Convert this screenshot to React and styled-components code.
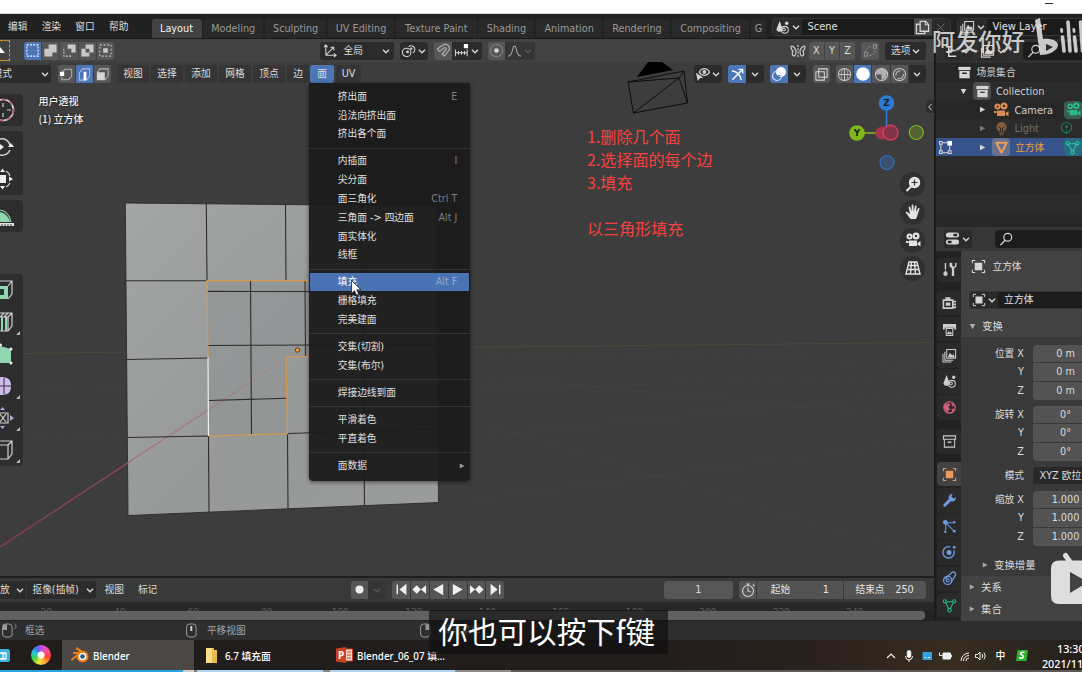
import React from "react";
import styled, { createGlobalStyle, css } from "styled-components";

const Global = createGlobalStyle`
  * { box-sizing: border-box; }
  body { margin: 0; background: #fff; overflow: hidden; }
`;

const ui = `"DejaVu Sans", "Noto Sans CJK SC", sans-serif`;
const cjk = `"Noto Sans CJK SC", "Noto Sans", sans-serif`;

/* ---------- icons, drawn on a 16 x 16 grid ---------- */
const s1 = { fill: "none", stroke: "currentColor", strokeWidth: 1.1 };
const ICONS = {
  down: <path d="M4.5 6.5 8 10l3.5-3.5" {...s1} strokeWidth={1.5} />,
  left: <path d="M10.5 3 6 8l4.5 5" {...s1} strokeWidth={1.5} />,
  triDown: <path d="M3 3.5h10L8 13z" fill="currentColor" />,
  triRight: <path d="M3.500 3.200v9.600L13 8z" fill="currentColor" />,
  selNew: <rect x="2" y="2" width="12" height="12" fill="none" stroke="#fff" strokeWidth="1.1" strokeDasharray="2 1.4" />,
  selAdd: <path d="M6 1.5h8.5V10H10v4.5H1.5V6H6z" fill="currentColor" />,
  selSub: <><path d="M6 1.5h8.5V10H10V6H6z" fill="currentColor" /><path d="M2 6v8h8" {...s1} strokeDasharray="2 1.4" /></>,
  selInv: <path fillRule="evenodd" d="M6 1.5h8.5V10H10v4.5H1.5V6H6zM6 6v4h4V6z" fill="currentColor" />,
  selAnd: <><path d="M5.5 5.5h5v5h-5z" fill="currentColor" /><rect x="2" y="2" width="12" height="12" {...s1} strokeDasharray="2 2" /></>,
  vert: <><path d="M3 10.500v3h7l3.500-3.500V2.500H6.500L3.500 5" {...s1} opacity=".7" /><path d="M1 5h4.500v4.500H1z" fill="#fff" /></>,
  edge: <><path d="M2.500 6v8h7.500l3.500-4V2H6z" {...s1} opacity=".75" /><path d="M7 5h3v9H7z" fill="#fff" /></>,
  face: <><path d="M2 6l3.500-4H14v8l-3.500 4" {...s1} opacity=".75" /><path d="M2 5.500h8.500V14H2z" fill="currentColor" /></>,
  axes: <><path d="M3 13V2.500M3 13h10.500M3 13l8-8M1 4.500l2-2.500 2 2.500M11.500 11l2.500 2-2.500 2M8 4.500h3.500V8" {...s1} /></>,
  pivot: <><circle cx="6" cy="10" r="4.500" {...s1} /><path d="M8 4a4 4 0 1 1 4.500 6.500" {...s1} /><circle cx="7" cy="9.500" r="1.500" fill="currentColor" /><circle cx="11" cy="6" r="1.200" fill="currentColor" /></>,
  magnet: <path d="M1.500 6.500 6 3c6-4.500 11 2 6.500 6.500L9 14l-2.500-2 3.800-4.500c1.500-2.300-.8-3.300-2.300-2L3.800 9z" {...s1} strokeWidth={1.400} />,
  snapInc: <><path d="M1.500 7v7M14 7v7M1.500 10.500H14M4.700 8.500v4M8 8.500v4M11.200 8.500v4" {...s1} /><path d="M10.500 1h4.500v4.500h-4.500z" fill="#fff" /></>,
  prop: <><circle cx="8" cy="8" r="6.500" {...s1} opacity=".35" /><circle cx="8" cy="8" r="2.500" fill="currentColor" /></>,
  curve: <path d="M1 14c3 0 4-2 5-7s3-5 4 0 2 7 5 7" {...s1} />,
  butterfly: <><path d="M8 2v12" {...s1} strokeDasharray="2 1.300" /><path d="M6 7.500C4 2.500.5 2 1 4.500S2.500 8 3.500 8C1.500 9 2 13 4 13s2-3 2-5.500zM10 7.500c2-5 5.500-5.500 5-3S13.500 8 12.500 8c2 1 1.500 5-.5 5s-2-3-2-5.500z" {...s1} /></>,
  merge: <><path d="M3 10c0-4 2-6 6-6M7 13c4 0 6-2 6-6" {...s1} strokeDasharray="2 1.500" /><path d="M11 2h3.500v3.500H11zM1.500 10.500H5V14H1.500z" {...s1} /></>,
  eye: <><path d="M4.500 5.500c2.500-5 8.500-5 11 0-2.500 4.500-8.500 4.500-11 0z" {...s1} strokeWidth={1.3} /><circle cx="10" cy="5.300" r="2" fill="currentColor" /><path d="M1 6l8 5.500-3.500.3L3 15z" fill="currentColor" /></>,
  gizmo: <><path d="M2 4c6 1 9 4 10 10M2.500 13.500 13 3M9 2.500h4.500V7" {...s1} strokeWidth={1.5} /></>,
  overlay: <><circle cx="10" cy="6" r="5" fill="#fff" /><circle cx="6" cy="10" r="4.500" fill="none" stroke="#dfe7f5" strokeWidth="1.200" /><path d="M6.500 9.500a3 3 0 0 1 3 .5" stroke="#4772b3" fill="none" /></>,
  xray: <><path d="M2 5h9v9H2z" {...s1} /><path d="M5 2h9v9H5z" {...s1} /></>,
  wire: <><circle cx="8" cy="8" r="6.500" {...s1} /><path d="M1.500 8h13M8 1.500v13" {...s1} /><ellipse cx="8" cy="8" rx="3.500" ry="6.500" {...s1} opacity=".6" /></>,
  solid: <circle cx="8" cy="8" r="6.800" fill="#fff" />,
  matcap: <><circle cx="8" cy="8" r="6.500" {...s1} /><path d="M8 8V1.500A6.500 6.500 0 0 0 1.500 8zM8 1.500A6.500 6.500 0 0 1 14.500 8H8zM8 8h5v3.500L8 14z" fill="currentColor" opacity=".8" /></>,
  render: <><circle cx="8" cy="8" r="6.500" {...s1} /><path d="M4 9c0-3 2-5 5-5M6 12.500c4 .5 6-2 6.500-5" {...s1} /></>,
  scene: <><path d="M5 1 8 9.500c0 4-6.500 4-6.500 0z" fill="currentColor" /><circle cx="10.500" cy="10.500" r="3.700" {...s1} /><circle cx="9.500" cy="10" r="1.500" {...s1} /><circle cx="12.500" cy="3.500" r="1.800" fill="currentColor" /></>,
  copy: <><path d="M5.500 1.500h6L14.500 5v7h-9z" {...s1} strokeWidth={1.4} /><path d="M11 1.500V5h3.500" {...s1} /><path d="M5 4.500H1.500v10h9V12" {...s1} strokeWidth={1.4} /></>,
  close: <path d="m2.500 2.500 11 11m0-11-11 11" {...s1} />,
  layers: <><path d="M5 1.500h9.500V11H5z" {...s1} /><path d="M3 4v9h9M1 6v9h9" {...s1} /><path d="m6 10 2.500-5L11 8l1-1.500 2 3.500z" fill="currentColor" /></>,
  image: <><path d="M3.500 1.500h11V12h-11z" {...s1} /><path d="M1.500 4v10h10" {...s1} /><path d="m4.500 11 3.500-7 3 4 1-1 2 4z" fill="currentColor" /></>,
  tree: <path d="M1 3h6M4 3v4h8M4 7v6h8" {...s1} strokeWidth={1.6} />,
  search: <><circle cx="10" cy="6" r="4.500" {...s1} strokeWidth={1.3} /><path d="M7 9.500 1.500 15" {...s1} strokeWidth={1.5} /></>,
  box: <><path d="M1.500 2h13v3.500h-13z" fill="currentColor" /><path fillRule="evenodd" d="M2.500 6.500h11V14h-11zM5.500 8v1.500h5V8z" fill="currentColor" /></>,
  boxLine: <><path d="M1.500 2h13v3.500h-13zM2.500 5.500h11V14h-11z" {...s1} /><path d="M6 8h4v1.500H6z" fill="currentColor" /></>,
  camera: <><circle cx="4.500" cy="4.500" r="3" fill="currentColor" /><circle cx="11" cy="4" r="3.500" fill="currentColor" /><path d="M4 8.500h8v5.500H4zM12.500 11l3-2v5.500l-3-2zM1 9h2.500v2H1z" fill="currentColor" /><circle cx="4.500" cy="4.500" r="1" fill="#3a2c22" /><circle cx="11" cy="4" r="1.200" fill="#3a2c22" /></>,
  bulb: <><path d="M8 1a5.500 5.500 0 0 1 3 10H5A5.500 5.500 0 0 1 8 1zM5.500 12h5v1.300h-5zM6 14h4v1.300H6z" fill="currentColor" /><path d="M5 6l2 1.500V11M11 6 9 7.500V11" stroke="#2a2420" fill="none" /></>,
  mesh: <path d="M2.500 3h11L8 13.500z" fill="none" stroke="currentColor" strokeWidth="2.200" strokeLinejoin="round" />,
  meshData: <><path d="M4.500 4h7M4 5l3.500 7M12 5l-3.500 7" {...s1} /><g {...s1}><circle cx="2.900" cy="3.500" r="1.700" /><circle cx="13.100" cy="3.500" r="1.700" /><circle cx="8" cy="13" r="1.900" /></g></>,
  lightData: <><circle cx="8" cy="7" r="5.500" {...s1} /><path d="M8 6v9" {...s1} strokeDasharray="2 1" /><circle cx="8" cy="6" r="1.400" fill="currentColor" /></>,
  editMode: <><path d="M3 5v7M5 13.500h6M12.500 6v5M5 3h5" {...s1} /><path d="M1.500 1.500h3v3h-3zM1.500 11.500h3v3h-3zM11 11.500h3v3h-3z" {...s1} /><path d="M10 1h5v5h-5z" fill="#fff" /></>,
  propsEd: <><rect x="1" y="1.500" width="14" height="5.500" rx="2.700" fill="currentColor" /><rect x="1" y="9" width="14" height="5.500" rx="2.700" fill="currentColor" /><path d="M9 3h4v2.500H9zM3 10.500h4V13H3z" fill="#2a2a2a" /></>,
  object: <><path d="M4 4h8v8H4z" fill="currentColor" /><path d="M1.500 4.500v-3h3M11.500 1.500h3v3M14.500 11.500v3h-3M4.500 14.500h-3v-3" {...s1} /></>,
  tool: <><path d="M3.700 1v7M3.700 9v5.500" stroke="currentColor" fill="none" strokeWidth="1.500" /><circle cx="3.700" cy="12.500" r="2.300" fill="currentColor" /><path d="M8 1v3.500l2.500 2.500v8h2.500V7l2.500-2.500V1l-1.500-.3V4l-1.500 1-1.500-1V.7z" fill="currentColor" /></>,
  renderTab: <><path d="M1.500 5.500h10V14h-10z" fill="none" stroke="currentColor" strokeWidth="1.700" /><path d="M4 8h5v3.500H4zM3.500 2.500H9V5H3.500zM12 6h3v2h-3zM12 9h3v2h-3zM12 12h3v2h-3z" fill="currentColor" /></>,
  output: <><path d="M1 2h14v6h-2V6H3v2H1z" fill="currentColor" /><path d="M4.500 7h7v7.500h-7z" {...s1} /><path d="m5 13 2-3.500 1.500 2L9.500 10l1.500 3z" fill="currentColor" /></>,
  world: <><circle cx="8" cy="8" r="6" {...s1} strokeWidth={1.4} /><path d="M3 5c2 0 3-2 5-1s0 2-1 3 2 1 1 3-2 1-2 3c-2-1-3-4-4-5zM10 3l3 3-2 1zM10 9l3 .5-2 3z" fill="currentColor" /></>,
  wrench: <path d="M15 4.500a4 4 0 0 1-5.500 4.200L4 14.200c-1.500 1.300-3.500-.7-2.200-2.200L7.300 6.500A4 4 0 0 1 11.500 1L9.800 3.500l2.700 2.700z" fill="currentColor" />,
  particles: <><path d="M4 5v7M5.500 4H12M5 5l7 7" {...s1} /><circle cx="3.500" cy="3.500" r="2.500" fill="currentColor" /><circle cx="13" cy="3.500" r="1.300" fill="currentColor" /><circle cx="13" cy="13" r="1.500" fill="currentColor" /><circle cx="3.500" cy="13.500" r="1.300" fill="currentColor" /></>,
  physics: <><path d="M12.500 5.500A6 6 0 1 1 9 2.200" {...s1} strokeWidth={1.400} /><circle cx="7.500" cy="8" r="2.700" fill="currentColor" /><circle cx="13" cy="2.500" r="1.500" fill="currentColor" /></>,
  constraint: <><path d="M3 8.500 10.500 1.500c2.500-1.500 5 1 3.500 3.500L9.500 12.500" {...s1} strokeWidth={1.400} /><circle cx="6" cy="10" r="4.300" {...s1} strokeWidth={1.400} /><circle cx="6" cy="10" r="1.600" {...s1} /></>,
  zoom: <><circle cx="9.500" cy="6.500" r="5.700" fill="currentColor" /><path d="M6 10.500 1.500 15" stroke="currentColor" strokeWidth="2.200" /><path d="M9.500 3.500v6M6.500 6.500h6" stroke="#333" strokeWidth="1.200" /></>,
  hand: <path d="M5.500 15C4 13.500 2.500 10.500.8 8.800c-.3-1 1-1.300 1.800-.6L5 10 3.700 3.500c0-1.200 1.300-1.300 1.600-.2L6.500 7.500 6.700 1.500c.1-1.200 1.600-1.200 1.700 0l.3 6L10 2.200c.3-1.100 1.700-.8 1.600.3L11 8l2-3.500c.7-1 1.800-.4 1.400.7L12.500 11c-.3 1.800-1 3-1.800 4z" fill="currentColor" />,
  persp: <path d="M4 2h8l3 12H1zM3.200 5.500h9.600M2.200 9.500h11.600M6.500 2 5.500 14M9.500 2l1 12" fill="none" stroke="currentColor" strokeWidth="1.400" />,
  first: <path d="M3.500 3v10M12.500 3.500v9L7 8z" fill="currentColor" stroke="currentColor" strokeWidth="1.500" />,
  last: <path d="M12.500 3v10M3.500 3.500v9L9 8z" fill="currentColor" stroke="currentColor" strokeWidth="1.500" />,
  prevKey: <path d="M.5 8 5 3.500 9.500 8 5 12.500zM15 3.500v9L9.500 8z" fill="currentColor" />,
  nextKey: <path d="M15.500 8 11 3.500 6.500 8l4.500 4.500zM1 3.500v9L6.500 8z" fill="currentColor" />,
  back: <path d="M13 2v12L2.500 8z" fill="currentColor" />,
  play: <path d="M3 2v12l10.500-6z" fill="currentColor" />,
  record: <circle cx="8" cy="8" r="4.300" fill="currentColor" />,
  clock: <><circle cx="8" cy="9" r="5.500" {...s1} /><path d="M8 5.500V9l2.500 1M6.500 2h3M8 2v1.500M13 2.500l1.500 1.500" {...s1} /></>,
};

const Svg = styled.svg`
  display: block;
  flex: none;
  width: ${(p) => p.$s}px;
  height: ${(p) => p.$s}px;
  color: ${(p) => p.$c};
  margin-left: ${(p) => p.$ml || 0}px;
`;
const Icon = ({ n, s = 15, c = "#d6d6d6", ml }) => (
  <Svg $s={s} $c={c} $ml={ml} viewBox="0 0 16 16">{ICONS[n]}</Svg>
);
const Chevron = styled.svg`
  display: block;
  flex: none;
  width: 12px;
  height: 12px;
  fill: none;
  stroke: ${(p) => p.$c || "#d6d6d6"};
  stroke-width: 1.4;
`;
const Down = ({ c }) => <Chevron $c={c} viewBox="0 0 12 12"><path d="M3 4.700 6 7.700l3-3" /></Chevron>;

/* ---------- frame ---------- */
const Screen = styled.div`
  position: relative;
  width: 1082px;
  height: 680px;
  overflow: hidden;
  display: flex;
  flex-direction: column;
  background: #fff;
  color: #dcdcdc;
  font: 9.7px/14px ${ui};
  white-space: nowrap;
`;
const Strip = styled.div`
  height: 14px;
  flex: none;
  border-bottom: 1px solid #d6d6d6;
  display: flex;
  justify-content: flex-end;
`;
const Minimise = styled.span`
  width: 8px;
  height: 1px;
  margin: 3px 29px 0 0;
  background: #333;
`;
const TopBar = styled.div`
  height: 25px;
  flex: none;
  display: flex;
  background: #212121;
  border-bottom: 1px solid #191919;
`;
const TopMenus = styled.div`
  width: 151.500px;
  flex: none;
  display: flex;
  gap: 14.300px;
  padding: 5.500px 0 0 8px;
`;
const Tabs = styled.div`
  display: flex;
  align-items: flex-end;
  gap: 1.700px;
  width: 613px;
  flex: none;
`;
const Tab = styled.div`
  width: ${(p) => p.$w}px;
  height: 19px;
  flex: none;
  padding-top: 3px;
  text-align: center;
  overflow: hidden;
  border-radius: 3px 3px 0 0;
  background: ${(p) => (p.$on ? "#424242" : "#292929")};
  color: ${(p) => (p.$on ? "#f0f0f0" : "#989898")};
`;
const Selector = styled.div`
  display: flex;
  height: 18px;
  margin: 4px 0 0 ${(p) => p.$ml}px;
  border-radius: 3px;
  overflow: hidden;
  background: #1b1b1b;
  border: 1px solid #363636;
  flex: none;
`;
const SelIcon = styled.div`
  display: flex;
  align-items: center;
  width: ${(p) => p.$w || 29}px;
  padding-left: ${(p) => (p.$w ? 1 : 2)}px;
  background: ${(p) => p.$bg || "#2a2a2a"};
`;
const SelText = styled.div`
  width: ${(p) => p.$w}px;
  padding: 0 0 0 6px;
  line-height: 15px;
  font-size: 9.900px;
  color: #e2e2e2;
`;

const Main = styled.div`
  display: flex;
  height: 582px;
  flex: none;
  background: #1c1c1c;
`;
const LeftCol = styled.div`
  width: 934px;
  margin-right: 2px;
  flex: none;
  display: flex;
  flex-direction: column;
  background: #3d3d3d;
`;
const RightCol = styled.div`
  width: 146px;
  flex: none;
  display: flex;
  flex-direction: column;
  overflow: hidden;
`;

/* ---------- header bars ---------- */
const Bar = styled.div`
  display: flex;
  align-items: center;
  height: ${(p) => p.$h}px;
  flex: none;
  background: ${(p) => p.$bg};
`;
const Group = styled.div`
  display: flex;
  flex: none;
  height: 18px;
  width: ${(p) => p.$w}px;
  margin-left: ${(p) => p.$ml || 0}px;
  border-radius: 3px;
  overflow: hidden;
  gap: ${(p) => p.$gap || 0}px;
`;
const Cell = styled.div`
  flex: ${(p) => (p.$w ? `0 0 ${p.$w}px` : "1 1 0")};
  display: flex;
  align-items: center;
  justify-content: ${(p) => p.$j || "center"};
  padding: 0 ${(p) => p.$p || 0}px;
  gap: ${(p) => p.$gap || 0}px;
  overflow: hidden;
  color: #dedede;
  background: ${(p) => ({ on: "#4d76b8", dark: "#2b2b2b", mid: "#353535", grey: "#565656" }[p.$k || "dark"])};
`;
const Push = styled.div`flex: 1;`;
const CursorTool = styled.div`
  width: 10px;
  height: 21px;
  margin-right: 14px;
  border: 1.500px dashed #d9972b;
  border-left: 0;
  display: flex;
  align-items: center;
  color: #fff;
`;

/* ---------- 3D viewport ---------- */
const Viewport = styled.div`
  position: relative;
  flex: 1;
  min-height: 0;
`;
const Scene = styled.svg`
  position: absolute;
  left: 0;
  top: -25px;
  width: 934px;
  height: 515px;
`;
const Header2 = styled(Bar)`position: relative; z-index: 2;`;
const ViewInfo = styled.div`
  position: absolute;
  left: 38.500px;
  top: 6.300px;
  font-weight: 500;
  font-family: ${cjk};
  font-size: 10px;
  line-height: 17.500px;
  color: #f2f2f2;
  text-shadow: 0 0 2px #111;
`;
const Notes = styled.div`
  position: absolute;
  left: 587px;
  top: 39px;
  font: 16.050px/23px ${cjk};
  color: #f6423f;
  white-space: pre;
`;
const Tools = styled.div`
  position: absolute;
  left: 0;
  top: 8px;
  width: 22.500px;
  display: flex;
  flex-direction: column;
`;
const ToolGroup = styled.div`
  margin-bottom: ${(p) => p.$mb || 0}px;
  border-radius: 0 4px 4px 0;
  background: #2d2d2d;
`;
const Tool = styled.div`
  position: relative;
  height: 32.100px;
  display: flex;
  align-items: center;
  svg { width: 22px; height: 26px; display: block; }
  ${(p) => p.$more && css`
    &::after {
      content: "";
      position: absolute;
      right: 3px;
      bottom: 3px;
      border: 2px solid transparent;
      border-right-color: #b5b5b5;
      border-bottom-color: #b5b5b5;
    }
  `}
`;
const Nav = styled.div`
  position: absolute;
  left: 900px;
  top: 85.500px;
  display: flex;
  flex-direction: column;
  gap: 3px;
`;
const NavBtn = styled.div`
  width: 25px;
  height: 25px;
  border-radius: 50%;
  background: #303030;
  display: flex;
  align-items: center;
  justify-content: center;
`;
const SideToggle = styled.div`
  position: absolute;
  right: 0;
  top: 14px;
  width: 8px;
  height: 13px;
  border-radius: 3px 0 0 3px;
  background: #2f2f2f;
  display: flex;
  align-items: center;
  justify-content: center;
`;

/* ---------- drop-down menu ---------- */
const Menu = styled.div`
  position: absolute;
  z-index: 5;
  left: 309.300px;
  top: 83px;
  width: 160.500px;
  height: 398px;
  padding-top: 4px;
  border-radius: 0 0 4px 4px;
  background: rgba(27, 27, 27, 0.955);
  box-shadow: 0 1px 4px rgba(0, 0, 0, 0.55);
`;
const MenuItem = styled.div`
  display: flex;
  justify-content: space-between;
  align-items: center;
  height: 18.800px;
  margin: 0 1px;
  padding: 1px 11.500px 0 27.500px;
  color: ${(p) => (p.$on ? "#fff" : "#e0e0e0")};
  background: ${(p) => (p.$on ? "#4a73b4" : "transparent")};
`;
const Key = styled.span`
  color: ${(p) => (p.$on ? "#93a9cd" : "#7d7d7d")};
  font-size: 9.600px;
`;
const MenuArrow = styled.div`margin-right: -9px;`;
const Rule = styled.div`
  height: 3.800px;
  margin-top: 4.400px;
  border-top: 1px solid #343434;
`;
const Pointer = styled.svg`
  position: absolute;
  z-index: 6;
  left: 350px;
  top: 279px;
  width: 13px;
  height: 18px;
`;

/* ---------- timeline ---------- */
const Timeline = styled.div`
  height: 45px;
  flex: none;
  border-top: 2px solid #1f1f1f;
  background: #232323;
`;
const Text = styled.span`margin-left: ${(p) => p.$ml || 0}px;`;
const Num = styled.div`
  flex: 1;
  display: flex;
  justify-content: space-between;
  align-items: center;
  padding: 0 ${(p) => p.$p || 13}px;
  background: #535353;
  color: #e4e4e4;
`;
const Ruler = styled.div`
  height: 9px;
  padding-top: 6px;
  display: flex;
  gap: 55px;
  padding-left: 37px;
  overflow: hidden;
  font-size: 9px;
  line-height: 9px;
  color: #5c5c5c;
  background: #282828;
  span { width: 18.500px; text-align: center; }
`;
const Scroll = styled.div`
  height: 9px;
  margin-right: 9px;
  border-radius: 0 4px 4px 0;
  background: #616161;
`;

/* ---------- outliner ---------- */
const Row = styled.div`
  display: flex;
  align-items: center;
  height: ${(p) => p.$h || 18.7}px;
  flex: none;
  padding-left: ${(p) => p.$pl || 0}px;
  color: ${(p) => p.$c || "#cfcfcf"};
  background: ${(p) => (p.$on ? "#36538c" : p.$odd ? "#2b2b2b" : "#272727")};
`;
const RowText = styled.span`
  font-size: ${(p) => p.$fs || 9.8}px;
  width: ${(p) => p.$w || "auto"};
  margin-left: ${(p) => p.$ml || 4.5}px;
  padding-top: 2px;
`;
const Chip = styled.div`
  width: 18px;
  height: 18px;
  border-radius: 4px;
  flex: none;
  display: flex;
  align-items: center;
  justify-content: center;
  margin-left: ${(p) => p.$ml || 0}px;
  background: ${(p) => p.$bg || "transparent"};
`;
const SearchBox = styled.div`
  flex: 1;
  height: 18px;
  border-radius: 4px 0 0 4px;
  margin-left: ${(p) => p.$ml}px;
  padding: 2px 4px;
  background: #1c1c1c;
`;

/* ---------- properties ---------- */
const Props = styled.div`
  display: flex;
  flex: 1;
  min-height: 0;
`;
const PropTabs = styled.div`
  width: 25px;
  flex: none;
  padding: 7px 0 0 1px;
  display: flex;
  flex-direction: column;
  gap: 1.700px;
  background: #222;
`;
const PropTab = styled.div`
  height: 24.500px;
  flex: none;
  display: flex;
  align-items: center;
  justify-content: center;
  border-radius: 4px 0 0 4px;
  margin-top: ${(p) => p.$mt || 0}px;
  background: ${(p) => (p.$on ? "#424242" : "#2a2a2a")};
`;
const PropBody = styled.div`
  width: 121px;
  flex: none;
  background: #424242;
`;
const Crumb = styled.div`
  display: flex;
  align-items: center;
  gap: 7px;
  padding-left: 9.500px;
  height: 32px;
`;
const DataBlock = styled.div`
  display: flex;
  height: 18px;
  margin: 8px 0 0 8px;
  border-radius: 4px 0 0 4px;
  overflow: hidden;
  background: #1d1d1d;
  border: 1px solid #333;
  border-right: 0;
`;
const PanelHead = styled.div`
  display: flex;
  align-items: center;
  height: ${(p) => p.$h}px;
  padding-left: ${(p) => p.$pl || 7}px;
  padding-top: ${(p) => p.$pt || 0}px;
  gap: 5px;
  font-size: 10.400px;
`;
const PanelBody = styled.div`
  height: 239px;
  padding-top: 7.500px;
  background: #393939;
`;
const FieldGroup = styled.div`
  display: flex;
  margin-bottom: 5.500px;
`;
const Labels = styled.div`
  width: 63px;
  flex: none;
  margin-right: 8.500px;
  text-align: right;
  line-height: 18.500px;
`;
const Fields = styled.div`
  width: 66px;
  flex: none;
  display: flex;
  flex-direction: column;
  gap: 1px;
  border-radius: 4px;
  overflow: hidden;
`;
const Field = styled.div`
  height: 17.830px;
  line-height: 17.500px;
  text-align: ${(p) => (p.$dark ? "left" : "center")};
  padding-left: ${(p) => (p.$dark ? 7 : 0)}px;
  background: ${(p) => (p.$dark ? "#282828" : "#535353")};
`;

/* ---------- status bar and task bar ---------- */
const Status = styled.div`
  display: flex;
  align-items: center;
  height: 19px;
  flex: none;
  background: #2e2e2e;
  color: #a2a2a2;
`;
const Mouse = styled.svg`
  width: 16px;
  height: 15px;
  flex: none;
  margin-left: ${(p) => p.$ml}px;
  margin-right: ${(p) => p.$mr}px;
`;
const TaskBar = styled.div`
  display: flex;
  height: 30px;
  flex: none;
  background: linear-gradient(90deg, #211d1c 0 58%, #2a211d 75%, #372c20 88%, #241f1d 100%);
  font: 500 9.800px/15px "Noto Sans", ${cjk};
  color: #fff;
`;
const Task = styled.div`
  width: ${(p) => p.$w}px;
  flex: none;
  display: flex;
  align-items: center;
  padding-left: ${(p) => p.$pl || 0}px;
  gap: ${(p) => p.$gap || 0}px;
  background: ${(p) => (p.$on ? "#4b4745" : "transparent")};
  svg { flex: none; }
  span { padding-top: 2px; }
`;
const Wheel = styled.div`
  width: 20px;
  height: 20px;
  border-radius: 50%;
  background: radial-gradient(circle, #fff 0 3px, transparent 4px),
    conic-gradient(#c04ae8, #ff4f93 15%, #ff4630 30%, #ffb02c 42%, #f6e23a 55%, #39d34a 68%, #2cc4e0 80%, #3b74f0 90%, #c04ae8);
`;
const Tray = styled.div`
  display: flex;
  align-items: center;
  margin-left: auto;
  width: 198px;
  flex: none;
  svg { flex: none; }
  span { width: 12px; margin-left: -28.500px; }
`;
const SogouMark = styled.svg`
  width: 12px;
  height: 11px;
  margin-left: 10.500px;
`;
const Clock = styled.div`
  width: 60px;
  flex: none;
  margin-left: 13px;
  padding-top: 2px;
  font-size: 10.800px;
  line-height: 15px;
  text-align: center;
`;
const Progress = styled.div`
  display: flex;
  height: 2px;
  flex: none;
  background: #5d5957;
`;
const Seg = styled.div`
  width: ${(p) => p.$w}px;
  background: ${(p) => p.$c};
`;

/* ---------- video overlays ---------- */
const Subtitle = styled.div`
  position: absolute;
  z-index: 8;
  left: 429px;
  top: 610px;
  width: 239px;
  height: 44px;
  padding-left: 9.300px;
  border-radius: 2px;
  background: rgba(13, 13, 13, 0.66);
  color: #fff;
  font: 29.600px/41px ${cjk};
`;
const Watermark = styled.div`
  position: absolute;
  z-index: 8;
  left: 932px;
  top: 16px;
  display: flex;
  gap: 10.500px;
  color: rgba(225, 225, 225, 0.88);
  font: 500 23.200px/48px ${cjk};
  svg { width: 48px; height: 44px; display: block; margin-top: 1px; }
`;
const TvMark = styled.svg`
  position: absolute;
  z-index: 8;
  left: 1050px;
  top: 551px;
  width: 32px;
  height: 54px;
`;

const menuItems = [
  ["挤出面", "E"], ["沿法向挤出面"], ["挤出各个面"], null,
  ["内插面", "I"], ["尖分面"], ["面三角化", "Ctrl T"], ["三角面 -> 四边面", "Alt J"], ["面实体化"], ["线框"], null,
  ["填充", "Alt F"], ["栅格填充"], ["完美建面"], null,
  ["交集(切割)"], ["交集(布尔)"], null,
  ["焊接边线到面"], null,
  ["平滑着色"], ["平直着色"], null,
  ["面数据", ">"],
];
const tabs = [["Layout", 50], ["Modeling", 60], ["Sculpting", 61.5], ["UV Editing", 66], ["Texture Paint", 81], ["Shading", 56], ["Animation", 66], ["Rendering", 66.3], ["Compositing", 77.5], ["G", 15]];
const headMenus = [["视图", 32, 6], ["选择", 32, 2], ["添加", 32, 2], ["网格", 32, 2], ["顶点", 32, 2], ["边", 22, 2], ["面", 24, 1], ["UV", 25, 2]];
const propTabs = [["tool", "#ccc", 0], ["renderTab", "#ccc", 7], ["output", "#ccc"], ["layers", "#ccc"], ["scene", "#ccc"], ["world", "#d2607a"], ["boxLine", "#ccc", 7.5], ["object", "#ec9a5c", 6.5], ["wrench", "#6f9be0"], ["particles", "#6f9be0"], ["physics", "#6f9be0"], ["constraint", "#6f9be0"], ["meshData", "#1fbf8f"]];

function SceneDrawing() {
  return (
    <Scene viewBox="0 61 934 515">
      <defs>
        <linearGradient id="face" x1="0" y1="0" x2="1" y2="1">
          <stop offset="0" stopColor="#a3a5a5" />
          <stop offset=".6" stopColor="#979999" />
          <stop offset="1" stopColor="#9a9c9c" />
        </linearGradient>
        <linearGradient id="axis" gradientUnits="userSpaceOnUse" x1="0" y1="547" x2="287" y2="358">
          <stop offset="0" stopColor="#8f3a50" />
          <stop offset=".43" stopColor="#94475a" />
          <stop offset=".46" stopColor="#a76d75" />
          <stop offset="1" stopColor="#9f8c8d" />
        </linearGradient>
      </defs>
      <g stroke="#424242" fill="none">
        <path d="M0 392 125 391M0 440 125 437M440 392 934 374M440 440 934 392M440 372 934 420M470 420 934 560M440 353 934 362M470 500 934 440" />
        <path d="M22 353.500 125 352M440 347.500 934 342.500" stroke="#494a3a" />
      </g>
      <path d="M125.300 203 436 206 438.500 502.500 128 515.500z" fill="url(#face)" stroke="#2a2a2a" strokeWidth=".9" />
      <path d="M207 281h103v75l-23.500 1 1 77-79 2z" fill="#909292" opacity=".6" />
      <path d="M0 547 287 358" stroke="url(#axis)" strokeWidth="1.200" />
      <g stroke="#2c2c2c" fill="none" strokeWidth="1.100">
        <path d="M206.300 204 207 280M285.500 205 286 280M362 205.500 364.500 505M126 280.700h81M126.700 359.500 208 358M127.300 437.500 208 436M208.500 436 209 512M287.500 434 288 509M287.500 433.500 438 429" />
        <path d="M250.500 281 251.500 434M305 281 305.500 356M207 291.400 437 291.800M208 345.500 437 344.500M208.500 400.500 286.500 398.300" />
      </g>
      <path d="M208 357.500 207 280.700H310M310 356.300 286 357 287.500 433.700 208.500 436" fill="none" stroke="#d8994f" strokeWidth="1.200" />
      <path d="M208 357.500 208.500 436" stroke="#f0f0f0" strokeWidth="1.200" />
      <circle cx="297.500" cy="350" r="2.200" fill="#f5a030" stroke="#4b3515" strokeWidth=".9" />
      <path d="M637 77 648 62h14l11 8z" fill="#000" />
      <path d="M628 82 684 71l3.500 32-54 10zM628 82l51-4 5-7M679 78l8.500 25M633.500 113 679 78" fill="none" stroke="#0c0c0c" />
      <path d="M886.500 110v16" stroke="#2f7fdb" strokeWidth="1.500" />
      <path d="M864 133h20" stroke="#86bd1c" strokeWidth="1.500" />
      <circle cx="882" cy="133" r="6.500" fill="#a8334b" />
      <circle cx="890.500" cy="132.700" r="7.500" fill="#833448" stroke="#e8385e" strokeWidth="1.200" />
      <circle cx="886.500" cy="103" r="7.800" fill="#2e7ad1" />
      <circle cx="857" cy="133" r="7.800" fill="#80b81c" />
      <circle cx="916.300" cy="132.500" r="7" fill="#506330" stroke="#7fb524" strokeWidth="1.200" />
      <circle cx="887" cy="162.500" r="7" fill="#3a5070" stroke="#3271be" strokeWidth="1.200" />
      <g fontFamily="DejaVu Sans" fontSize="9" fontWeight="700" textAnchor="middle" fill="#16202c">
        <text x="886.500" y="106.300">Z</text>
        <text x="857" y="136.300">Y</text>
      </g>
    </Scene>
  );
}

const line = { fill: "none", stroke: "#d0d0d0", strokeWidth: 1.2 };
function ToolShelf() {
  return (
    <Tools>
      <ToolGroup $mb={5}>
        <Tool><svg viewBox="-3 -13 22 26"><circle cx="0" cy="0" r="10.500" {...line} strokeWidth={1.6} /><circle cx="0" cy="0" r="10.500" fill="none" stroke="#c9526a" strokeWidth="1.600" strokeDasharray="4 4" /><path d="M4 0h4M0-7v4M0 3v4" {...line} /></svg></Tool>
      </ToolGroup>
      <ToolGroup $mb={5}>
        <Tool><svg viewBox="0 -13 22 26"><path d="M0-8C5-9 9-6 10-2M10 3C8 7 5 9 0 8" {...line} strokeWidth={1.5} /><path d="M8 0h6L11-4zM0-3l4 3-4 3z" fill="#eee" /></svg></Tool>
        <Tool><svg viewBox="0 -13 22 26"><path d="M6-8a9 9 0 0 1 4 5M10 4A9 9 0 0 1 6 8" {...line} /><path d="M0-4h6v8H0zM0-7l2.500-3.500L5-7zM0 7l2.500 3.500L5 7zM9-2.500 13 0 9 2.500z" fill="#eee" /></svg></Tool>
      </ToolGroup>
      <ToolGroup $mb={41.5}>
        <Tool><svg viewBox="0 -13 22 26"><path d="M0-4C6-3 9 2 10 6H0z" fill="#8fd6b1" /><path d="M0-6C7-5 10 1 11 6" {...line} stroke="#8fd6b1" /><path d="M0 7h14v3H0z" fill="#e5e5e5" /><path d="M2 10V8M5 10V8M8 10V8M11 10V8" stroke="#333" /></svg></Tool>
      </ToolGroup>
      <ToolGroup>
        <Tool><svg viewBox="0 -13 22 26"><path d="M0-4h8V9H0z" fill="#8fd6b1" /><path d="M0-1h4v6H0z" fill="#223a30" /><path d="M0-9h12v13L8 9M8-4l4-5" {...line} /></svg></Tool>
        <Tool $more><svg viewBox="0 -13 22 26"><path d="M1-5h2V9H1zM5-5h2V9H5z" fill="#8fd6b1" /><path d="M0-9h12v13L8 9H0M0-5h8V9M8-5l4-4M0-5l4-4M4-5l4-4" {...line} /></svg></Tool>
        <Tool><svg viewBox="0 -13 22 26"><path d="M0-8 11-5V9H0z" fill="#8fd6b1" /><circle cx="11" cy="-5" r="1.500" fill="#eee" /><circle cx="11" cy="9" r="1.500" fill="#eee" /><circle cx="0.500" cy="-9" r="1.500" fill="#eee" /></svg></Tool>
        <Tool $more><svg viewBox="0 -13 22 26"><path d="M0-9C8-9 11-7 11 0S8 9 0 9z" fill="#cdbbe8" /><path d="M0 0h11M4-8v16" stroke="#3a3344" strokeWidth="1.100" /></svg></Tool>
        <Tool $more><svg viewBox="0 -13 22 26"><path d="M0-5h8V5H0M0-4l6 8M0 4l6-8" {...line} /><path d="M0-8l2.500-3L5-8zM0 8l2.500 3L5 8zM10-3l4 3-4 3z" fill="#b9a6dc" /></svg></Tool>
        <Tool $more><svg viewBox="0 -13 22 26"><path d="M0-9h12v13L8 9H0M0-5h8V9M8-5l4-4" {...line} /></svg></Tool>
      </ToolGroup>
    </Tools>
  );
}

const Dd = ({ ico, w, ml, k }) => (
  <Group $w={w} $ml={ml}><Cell $k={k}><Icon n={ico} s={15} /><Down /></Cell></Group>
);

function Transform({ label, vals }) {
  return (
    <FieldGroup>
      <Labels><div>{label} X</div><div>Y</div><div>Z</div></Labels>
      <Fields>{vals.map((v, i) => <Field key={i}>{v}</Field>)}</Fields>
    </FieldGroup>
  );
}

export default function App() {
  return (
    <Screen>
      <Global />
      <Strip><Minimise /></Strip>
      <TopBar>
        <TopMenus><span>编辑</span><span>渲染</span><span>窗口</span><span>帮助</span></TopMenus>
        <Tabs>{tabs.map(([t, w], i) => <Tab key={t} $w={w} $on={i === 0}>{t}</Tab>)}</Tabs>
        <Selector $ml={7}>
          <SelIcon><Icon n="scene" /><Down /></SelIcon>
          <SelText $w={112}>Scene</SelText>
          <SelIcon $w={18} $bg="#4a4a4a"><Icon n="copy" /></SelIcon>
          <SelIcon $w={18}><Icon n="close" s={11} c="#777" ml={2} /></SelIcon>
        </Selector>
        <Selector $ml={6}>
          <SelIcon><Icon n="layers" /><Down /></SelIcon>
          <SelText $w={110}>View Layer</SelText>
        </Selector>
      </TopBar>

      <Main>
        <LeftCol>
          <Bar $h={23} $bg="#424242">
            <CursorTool><svg width="5" height="8"><path d="M0 0 5 6H0z" fill="#fff" /></svg></CursorTool>
            <Group $w={90} $gap={1}>
              <Cell $k="on"><Icon n="selNew" /></Cell>
              {["selAdd", "selSub", "selInv", "selAnd"].map((n) => <Cell key={n} $k="grey"><Icon n={n} c="#c9c9c9" /></Cell>)}
            </Group>
            <Group $w={74} $ml={206}><Cell $j="flex-start" $p={2.5} $gap={6}><Icon n="axes" /><span>全局</span><Push /><Down /></Cell></Group>
            <Dd ico="pivot" w={28} ml={6} />
            <Group $w={48} $ml={6}><Cell $k="grey" $w={18}><Icon n="magnet" c="#aaa" /></Cell><Cell><Icon n="snapInc" /><Down /></Cell></Group>
            <Group $w={47} $ml={6}><Cell $k="grey" $w={17}><Icon n="prop" /></Cell><Cell $k="mid"><Icon n="curve" c="#a5a5a5" /><Down c="#555" /></Cell></Group>
            <Push />
            <Icon n="butterfly" s={16} />
            <Group $w={46} $ml={3} $gap={1}>{["X", "Y", "Z"].map((a) => <Cell key={a} $k="grey">{a}</Cell>)}</Group>
            <Group $w={18} $ml={6}><Cell $k="grey"><Icon n="merge" c="#8f8f8f" /></Cell></Group>
            <Group $w={41} $ml={6}><Cell $j="space-between" $p={6}><span>选项</span><Down /></Cell></Group>
            <Group $w={8} />
          </Bar>
          <Header2 $h={24} $bg="transparent">
            <Group $w={51}><Cell $j="space-between" $p={0}><Text $ml={-7.5}>模式</Text><Down /></Cell></Group>
            <Group $w={53} $ml={7} $gap={1}><Cell $k="grey"><Icon n="vert" /></Cell><Cell $k="on"><Icon n="edge" /></Cell><Cell $k="grey"><Icon n="face" /></Cell></Group>
            {headMenus.map(([t, w, ml]) => <Group key={t} $w={w} $ml={ml}><Cell $k={t === "面" ? "on" : "mid"}>{t}</Cell></Group>)}
            <Push />
            <Dd ico="eye" w={28} />
            <Group $w={36} $ml={6}><Cell $k="on"><Icon n="gizmo" c="#fff" /></Cell><Cell><Down /></Cell></Group>
            <Group $w={36} $ml={6}><Cell $k="on"><Icon n="overlay" s={16} /></Cell><Cell><Down /></Cell></Group>
            <Group $w={17} $ml={7}><Cell $k="grey"><Icon n="xray" /></Cell></Group>
            <Group $w={90} $ml={6} $gap={1}>
              <Cell $k="grey"><Icon n="wire" c="#c5c5c5" /></Cell><Cell $k="on"><Icon n="solid" s={16} /></Cell>
              <Cell $k="grey"><Icon n="matcap" c="#c5c5c5" /></Cell><Cell $k="grey"><Icon n="render" c="#c5c5c5" /></Cell><Cell><Down /></Cell>
            </Group>
            <Group $w={8} />
          </Header2>
          <Viewport>
            <SceneDrawing />
            <ToolShelf />
            <ViewInfo>用户透视<br />(1) 立方体</ViewInfo>
            <Notes>{"1.删除几个面\n2.选择面的每个边\n3.填充\n\n以三角形填充"}</Notes>
            <Nav>{["zoom", "hand", "camera", "persp"].map((n) => <NavBtn key={n}><Icon n={n} s={16} c="#e4e4e4" /></NavBtn>)}</Nav>
            <SideToggle><Icon n="left" s={10} /></SideToggle>
          </Viewport>
          <Timeline>
            <Bar $h={23.5} $bg="#393939">
              <Group $w={96} $gap={1}>
                <Cell $w={25.5} $j="space-between"><span>放</span><Down /></Cell>
                <Cell $j="space-between"><Text $ml={6}>抠像(插帧)</Text><Down /></Cell>
              </Group>
              <Text $ml={8.5}>视图</Text><Text $ml={14}>标记</Text>
              <Group $w={35} $ml={193.5}><Cell $k="grey"><Icon n="record" c="#eee" /></Cell><Cell $k="mid"><Down c="#555" /></Cell></Group>
              <Group $w={112} $ml={6.5} $gap={1}>{["first", "prevKey", "back", "play", "nextKey", "last"].map((n) => <Cell key={n} $k="grey"><Icon n={n} s={15} c="#f0f0f0" /></Cell>)}</Group>
              <Group $w={69} $ml={159.5}><Cell $k="grey">1</Cell></Group>
              <Group $w={187} $ml={6} $gap={1}>
                <Cell $k="grey" $w={17.5}><Icon n="clock" s={16} /></Cell>
                <Num $p={13.5}><span>起始</span><span>1</span></Num>
                <Num $p={12}><span>结束点</span><span>250</span></Num>
              </Group>
            </Bar>
            <Ruler>{[20, 40, 60, 80, 100, 120, 140, 160, 180, 200, 220, 240].map((n) => <span key={n}>{n}</span>)}</Ruler>
            <Scroll />
          </Timeline>
        </LeftCol>

        <RightCol>
          <Bar $h={24} $bg="#303030">
            <Dd ico="tree" w={29} ml={8} /><Dd ico="image" w={29} ml={6} />
            <SearchBox $ml={15}><Icon n="search" s={14} /></SearchBox>
          </Bar>
          <Row $pl={20.5}><Icon n="box" /><RowText $ml={5}>场景集合</RowText></Row>
          <Row $odd $pl={23}><Icon n="triDown" s={9} /><Chip $ml={5} $bg="#4d4d4d"><Icon n="box" /></Chip><RowText $ml={5}>Collection</RowText></Row>
          <Row $pl={42}><Icon n="triRight" s={9} /><Chip $ml={5}><Icon n="camera" s={16} c="#dc8d55" /></Chip><RowText $w="50px">Camera</RowText><Chip $ml={7.5} $bg="#3b5b50"><Icon n="camera" c="#28b98c" /></Chip></Row>
          <Row $odd $pl={42} $c="#6e6e6e"><Icon n="triRight" s={9} c="#777" /><Chip $ml={5}><Icon n="bulb" c="#855b3c" /></Chip><RowText $w="40px">Light</RowText><Chip $ml={3}><Icon n="lightData" c="#1b7f5d" /></Chip></Row>
          <Row $on $pl={2} $c="#eaa03c"><Icon n="editMode" /><Icon n="triRight" s={9} ml={25} /><Chip $ml={5} $bg="#66718f"><Icon n="mesh" c="#ee9a5b" /></Chip><RowText $w="42px" $ml={5}>立方体</RowText><Chip $ml={6.5} $bg="#2c6a80"><Icon n="meshData" c="#20d0a0" /></Chip></Row>
          <Row $odd /><Row /><Row $odd /><Row $h={14} />
          <Bar $h={24} $bg="#363636">
            <Dd ico="propsEd" w={28} ml={8} />
            <SearchBox $ml={23}><Icon n="search" s={14} /></SearchBox>
          </Bar>
          <Props>
            <PropTabs>{propTabs.map(([n, c, mt], i) => <PropTab key={n} $mt={mt} $on={i === 7}><Icon n={n} c={c} s={15} /></PropTab>)}</PropTabs>
            <PropBody>
              <Crumb><Icon n="object" /><span>立方体</span></Crumb>
              <DataBlock><SelIcon><Icon n="object" s={14} /><Down /></SelIcon><SelText $w={90}>立方体</SelText></DataBlock>
              <PanelHead $h={28.5} $pl={7} $pt={6.5}><Icon n="triDown" s={9} c="#aaa" /><span>变换</span></PanelHead>
              <PanelBody>
                <Transform label="位置" vals={["0 m", "0 m", "0 m"]} />
                <Transform label="旋转" vals={["0°", "0°", "0°"]} />
                <FieldGroup><Labels>模式</Labels><Fields><Field $dark>XYZ 欧拉角</Field></Fields></FieldGroup>
                <Transform label="缩放" vals={["1.000", "1.000", "1.000"]} />
                <PanelHead $h={26} $pl={20}><Icon n="triRight" s={8} c="#aaa" /><Text>变换增量</Text></PanelHead>
              </PanelBody>
              <PanelHead $h={22}><Icon n="triRight" s={8} c="#aaa" /><span>关系</span></PanelHead>
              <PanelHead $h={22}><Icon n="triRight" s={8} c="#aaa" /><span>集合</span></PanelHead>
            </PropBody>
          </Props>
        </RightCol>
      </Main>

      <Status>
        <Mouse $ml={2} $mr={7} viewBox="0 0 16 15"><rect x=".6" y="1" width="9.500" height="13" rx="3" fill="none" stroke="#999" /><path d="M1 1.500h4V7H1z" fill="#999" /><path d="M12.500 1c2 1.500 2 3.500 0 5" fill="none" stroke="#999" /></Mouse>
        <span>框选</span>
        <Mouse $ml={141.5} $mr={5} viewBox="0 0 16 15"><rect x=".6" y="1" width="9.500" height="13" rx="3" fill="none" stroke="#999" /><path d="M4.300 3h2v5h-2z" fill="#ccc" /></Mouse>
        <span>平移视图</span>
        <Mouse $ml={174} $mr={6} viewBox="0 0 16 15"><rect x=".6" y="1" width="9.500" height="13" rx="3" fill="none" stroke="#999" /><path d="M5.500 1.500h4V7h-4z" fill="#999" /></Mouse>
        <span>调用菜单</span>
      </Status>
      <TaskBar>
        <Task $w={31}><svg width="11" height="15"><path d="M0 1h8q2 0 2 3v7q0 3-2 3H0z" fill="#3fb3dd" /><path d="M0 5h6v6H0M3 5v6" stroke="#fff" fill="none" strokeWidth="1.300" /></svg></Task>
        <Task $w={31}><Wheel /></Task>
        <Task $w={132} $on $pl={9} $gap={4}>
          <svg width="18" height="16" viewBox="0 0 18 16"><path d="M1 12.500 9 6H3M6 1.500 15 8" stroke="#ea7d16" strokeWidth="2.200" fill="none" strokeLinecap="round" /><circle cx="11.500" cy="9.500" r="6" fill="#ea7d16" /><circle cx="11.500" cy="9.500" r="3.800" fill="#fff" /><circle cx="11.500" cy="9.500" r="2.300" fill="#265787" /></svg>
          <Text>Blender</Text>
        </Task>
        <Task $w={130} $pl={11} $gap={7}>
          <svg width="13" height="17"><path d="M1 1h8v2h3v13H1z" fill="#e9bb4c" /><path d="M1 1h6v15H1z" fill="#f9dc85" /></svg>
          <span>6.7 填充面</span>
        </Task>
        <Task $w={130} $pl={12} $gap={4}>
          <svg width="17" height="16" viewBox="0 0 17 16"><path d="M9 2h7.500v12H9z" fill="#f3d9d0" stroke="#c9421f" /><path d="M11 5h4M11 8h4M11 11h4" stroke="#c9421f" /><path d="M0 1.500 10 0v16L0 14.500z" fill="#cb4222" /><text x="2" y="12" fontFamily="Noto Sans" fontSize="10" fontWeight="700" fill="#fff">P</text></svg>
          <Text>Blender_06_07 填...</Text>
        </Task>
        <Tray>
          <svg width="140" height="18" viewBox="884 -1 140 18" fill="none" stroke="#f0f0f0">
            <path d="m887 11 4-4 4 4" strokeWidth="1.200" />
            <rect x="907.300" y="3.500" width="3.500" height="7" rx="1.700" fill="#fff" /><path d="M905.500 9q0 4 3.500 4t3.500-4M909 13v2" />
            <rect x="922.500" y="5" width="9.500" height="8" rx="1" fill="#2ea3e0" stroke="none" /><path d="M924.500 10.500h2M928 10.500h2" />
            <path d="M943 6h7.500v6H943z" fill="#eee" /><path d="M951.500 8v2M939.500 5.500v3h3" />
            <path d="M961 14a8 8 0 0 1 8-8M963.500 14a5.500 5.500 0 0 1 5.500-5.500M966 14a3 3 0 0 1 3-3" />
            <path d="M975.500 7.500h2L980 5v8l-2.500-2.500h-2zM982 7q1.500 2 0 4M984 5.500q2.500 3.500 0 7" />
          </svg>
          <span>中</span>
          <SogouMark viewBox="0 0 12 11"><path d="M1.500 0H12l-1.500 11H0z" fill="#2bb12c" /><path d="M8.500 2.500c-4-.8-5 1.500-2.500 2.500s1.500 4-3 2.800" stroke="#fff" strokeWidth="1.600" fill="none" /></SogouMark>
          <Clock>13:30<br />2021/11/17</Clock>
        </Tray>
      </TaskBar>
      <Progress>
        <Seg $w={183} $c="#25a5e2" /><Seg $w={11} $c="#d3cfcc" /><Seg $w={3} $c="#7f7a76" /><Seg $w={126} $c="#aed4f2" />
        <Seg $w={7} $c="#8b8580" /><Seg $w={125} $c="#aed4f2" /><Seg $w={56} $c="#8f8b88" />
      </Progress>

      <Menu>
        {menuItems.map((m, i) => m === null ? <Rule key={i} /> : (
          <MenuItem key={i} $on={m[0] === "填充"}>
            <span>{m[0]}</span>
            {m[1] === ">" ? <MenuArrow><Icon n="triRight" s={8} c="#999" /></MenuArrow> : m[1] && <Key $on={m[0] === "填充"}>{m[1]}</Key>}
          </MenuItem>
        ))}
      </Menu>
      <Pointer viewBox="0 0 13 18"><path d="M1.500 1.500v13l3-2.800 2 4.500 2.300-1-2-4.400H11z" fill="#fff" stroke="#222" strokeWidth=".8" /></Pointer>
      <Subtitle>你也可以按下f键</Subtitle>
      <Watermark>
        <span>阿发你好</span>
        <svg viewBox="0 0 48 44">
          <path d="M0 3 5 1 8 22C16 21 23 24 23 28c0 5-8 10-18 10z" fill="currentColor" />
          <path d="M11 27v7l7-4z" fill="#2a2a2a" />
          <g fill="none" stroke="currentColor" strokeLinecap="round">
            <path d="M27.500 20 29 34M33 5l2 29M39.500 20 41 34M45.500 5l2 29" strokeWidth="3.600" />
            <path d="M26.500 12.500l.3 2M38.800 12.500l.3 2" strokeWidth="2.800" />
          </g>
        </svg>
      </Watermark>
      <TvMark viewBox="0 0 32 54">
        <path d="M15.500 4.500l5 7" stroke="#dedede" strokeWidth="5" strokeLinecap="round" />
        <path fillRule="evenodd" d="M9 9.500h25V53H9q-8 0-8-8V17.500q0-8 8-8zM20 21v21l18-11z" fill="#dedede" />
      </TvMark>
    </Screen>
  );
}
